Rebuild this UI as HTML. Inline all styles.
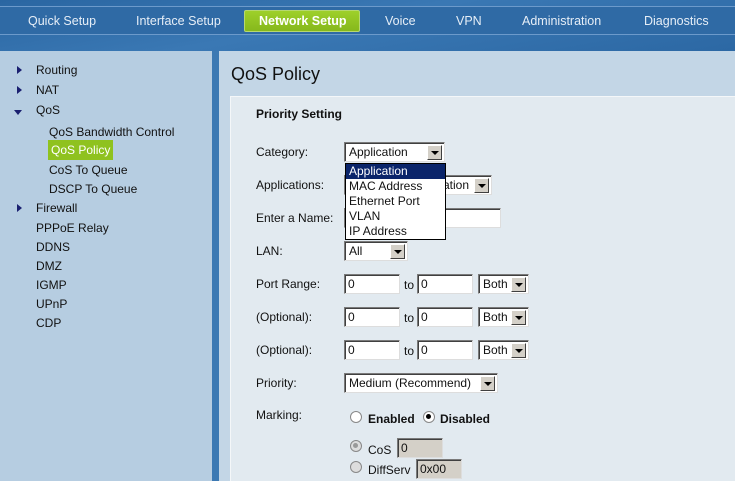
<!DOCTYPE html>
<html><head><style>
*{margin:0;padding:0;box-sizing:border-box}
html,body{width:735px;height:481px;overflow:hidden}
body{position:relative;font-family:"Liberation Sans",sans-serif;font-size:12px;background:#c3d6e6;color:#111}
.a{position:absolute;white-space:nowrap}
#top{left:0;top:0;width:735px;height:51px;background:linear-gradient(170deg,#2a66a2 0%,#3a78b4 45%,#2c68a4 100%)}
#tabs{left:0;top:6px;width:735px;height:29px;border-top:1px solid #6c9acb;border-bottom:1px solid #6c9acb;background:#2f6aa5}
.tab{color:#e6eef7;font-size:12.5px;top:14px}
#sel{left:244px;top:10px;width:116px;height:22px;background:linear-gradient(#9ed02a,#86b81c);border:1px solid #b6d870;border-radius:2px}
#side{left:0;top:51px;width:212px;height:430px;background:#b6cde1}
#div{left:212px;top:51px;width:7px;height:430px;background:#3c79b3}
.s{font-size:12px;color:#111}
.tri{width:0;height:0;border-top:4px solid transparent;border-bottom:4px solid transparent;border-left:5px solid #1a2070}
.trid{width:0;height:0;border-left:4px solid transparent;border-right:4px solid transparent;border-top:5px solid #1a2070}
#panel{left:230px;top:96px;width:505px;height:385px;background:#e2eaf0;border:1px solid #f4f7f9;border-bottom:none;border-right:none}
.l{font-size:12px}
.inp{background:#fff;border:1px solid #7a7a7a;border-right-color:#ddd;border-bottom-color:#ddd;box-shadow:inset 1px 1px 0 #404040;height:20px;font-size:12px;padding:2px 3px}
.sel{background:#fff;border:1px solid #7a7a7a;border-right-color:#ddd;border-bottom-color:#ddd;box-shadow:inset 1px 1px 0 #404040;height:20px;font-size:12px;padding:2px 4px}
.btn{position:absolute;right:2px;top:2px;width:15px;height:15px;background:#d4d0c8;border:1px solid;border-color:#fff #404040 #404040 #fff}
.btn:after{content:"";position:absolute;left:3px;top:5px;border-left:4px solid transparent;border-right:4px solid transparent;border-top:4px solid #000}
.rad{width:12px;height:12px;border-radius:50%;background:#fff;border:1px solid #888}
</style></head><body>
<div class="a" id="top"></div>
<div class="a" id="tabs"></div>
<div class="a" id="sel"></div>
<div class="a tab" style="left:28px">Quick Setup</div>
<div class="a tab" style="left:136px">Interface Setup</div>
<div class="a tab" style="left:259px;color:#fff;font-weight:bold">Network Setup</div>
<div class="a tab" style="left:385px">Voice</div>
<div class="a tab" style="left:456px">VPN</div>
<div class="a tab" style="left:522px">Administration</div>
<div class="a tab" style="left:644px">Diagnostics</div>
<div class="a" id="side"></div>
<div class="a" id="div"></div>
<div class="a tri" style="left:17px;top:66px"></div>
<div class="a s" style="left:36px;top:63px">Routing</div>
<div class="a tri" style="left:17px;top:86px"></div>
<div class="a s" style="left:36px;top:83px">NAT</div>
<div class="a trid" style="left:14px;top:110px"></div>
<div class="a s" style="left:36px;top:103px">QoS</div>
<div class="a s" style="left:49px;top:125px">QoS Bandwidth Control</div>
<div class="a" style="left:48px;top:140px;width:65px;height:20px;background:#8fc21f"></div>
<div class="a s" style="left:51px;top:143px;color:#fff">QoS Policy</div>
<div class="a s" style="left:49px;top:163px">CoS To Queue</div>
<div class="a s" style="left:49px;top:182px">DSCP To Queue</div>
<div class="a tri" style="left:17px;top:204px"></div>
<div class="a s" style="left:36px;top:201px">Firewall</div>
<div class="a s" style="left:36px;top:221px">PPPoE Relay</div>
<div class="a s" style="left:36px;top:240px">DDNS</div>
<div class="a s" style="left:36px;top:259px">DMZ</div>
<div class="a s" style="left:36px;top:278px">IGMP</div>
<div class="a s" style="left:36px;top:297px">UPnP</div>
<div class="a s" style="left:36px;top:316px">CDP</div>
<div class="a" style="left:231px;top:64px;font-size:18px;color:#111">QoS Policy</div>
<div class="a" id="panel"></div>
<div class="a" style="left:256px;top:107px;font-weight:bold;font-size:12px">Priority Setting</div>
<div class="a l" style="left:256px;top:145px">Category:</div>
<div class="a l" style="left:256px;top:178px">Applications:</div>
<div class="a l" style="left:256px;top:211px">Enter a Name:</div>
<div class="a l" style="left:256px;top:244px">LAN:</div>
<div class="a l" style="left:256px;top:277px">Port Range:</div>
<div class="a l" style="left:256px;top:310px">(Optional):</div>
<div class="a l" style="left:256px;top:343px">(Optional):</div>
<div class="a l" style="left:256px;top:376px">Priority:</div>
<div class="a l" style="left:256px;top:408px">Marking:</div>
<div class="a sel" style="left:344px;top:142px;width:101px">Application<span class="btn"></span></div>
<div class="a sel" style="left:344px;top:175px;width:148px;text-align:right;padding-right:22px">ation<span class="btn"></span></div>
<div class="a inp" style="left:344px;top:208px;width:157px"></div>
<div class="a sel" style="left:344px;top:241px;width:64px">All<span class="btn"></span></div>
<div class="a" style="left:345px;top:163px;width:101px;height:77px;background:#fff;border:1px solid #000;font-size:12px;line-height:15px">
<div style="background:#0a246a;color:#fff;padding-left:3px">Application</div>
<div style="padding-left:3px">MAC Address</div>
<div style="padding-left:3px">Ethernet Port</div>
<div style="padding-left:3px">VLAN</div>
<div style="padding-left:3px">IP Address</div></div>
<div class="a inp" style="left:344px;top:274px;width:56px">0</div>
<div class="a l" style="left:404px;top:278px">to</div>
<div class="a inp" style="left:417px;top:274px;width:56px">0</div>
<div class="a sel" style="left:478px;top:274px;width:51px">Both<span class="btn"></span></div>
<div class="a inp" style="left:344px;top:307px;width:56px">0</div>
<div class="a l" style="left:404px;top:311px">to</div>
<div class="a inp" style="left:417px;top:307px;width:56px">0</div>
<div class="a sel" style="left:478px;top:307px;width:51px">Both<span class="btn"></span></div>
<div class="a inp" style="left:344px;top:340px;width:56px">0</div>
<div class="a l" style="left:404px;top:344px">to</div>
<div class="a inp" style="left:417px;top:340px;width:56px">0</div>
<div class="a sel" style="left:478px;top:340px;width:51px">Both<span class="btn"></span></div>
<div class="a sel" style="left:344px;top:373px;width:154px">Medium (Recommend)<span class="btn"></span></div>
<div class="a rad" style="left:350px;top:411px"></div>
<div class="a" style="left:368px;top:412px;font-weight:bold">Enabled</div>
<div class="a rad" style="left:423px;top:411px"></div>
<div class="a" style="left:426px;top:414px;width:5px;height:5px;border-radius:50%;background:#000"></div>
<div class="a" style="left:440px;top:412px;font-weight:bold">Disabled</div>
<div class="a rad" style="left:350px;top:440px;background:#ddd"></div>
<div class="a" style="left:353px;top:443px;width:5px;height:5px;border-radius:50%;background:#999"></div>
<div class="a" style="left:368px;top:443px">CoS</div>
<div class="a inp" style="left:397px;top:438px;width:46px;background:#d4d0c8">0</div>
<div class="a rad" style="left:350px;top:461px;background:#ddd"></div>
<div class="a" style="left:368px;top:463px">DiffServ</div>
<div class="a inp" style="left:416px;top:459px;width:46px;background:#d4d0c8">0x00</div>
</body></html>
